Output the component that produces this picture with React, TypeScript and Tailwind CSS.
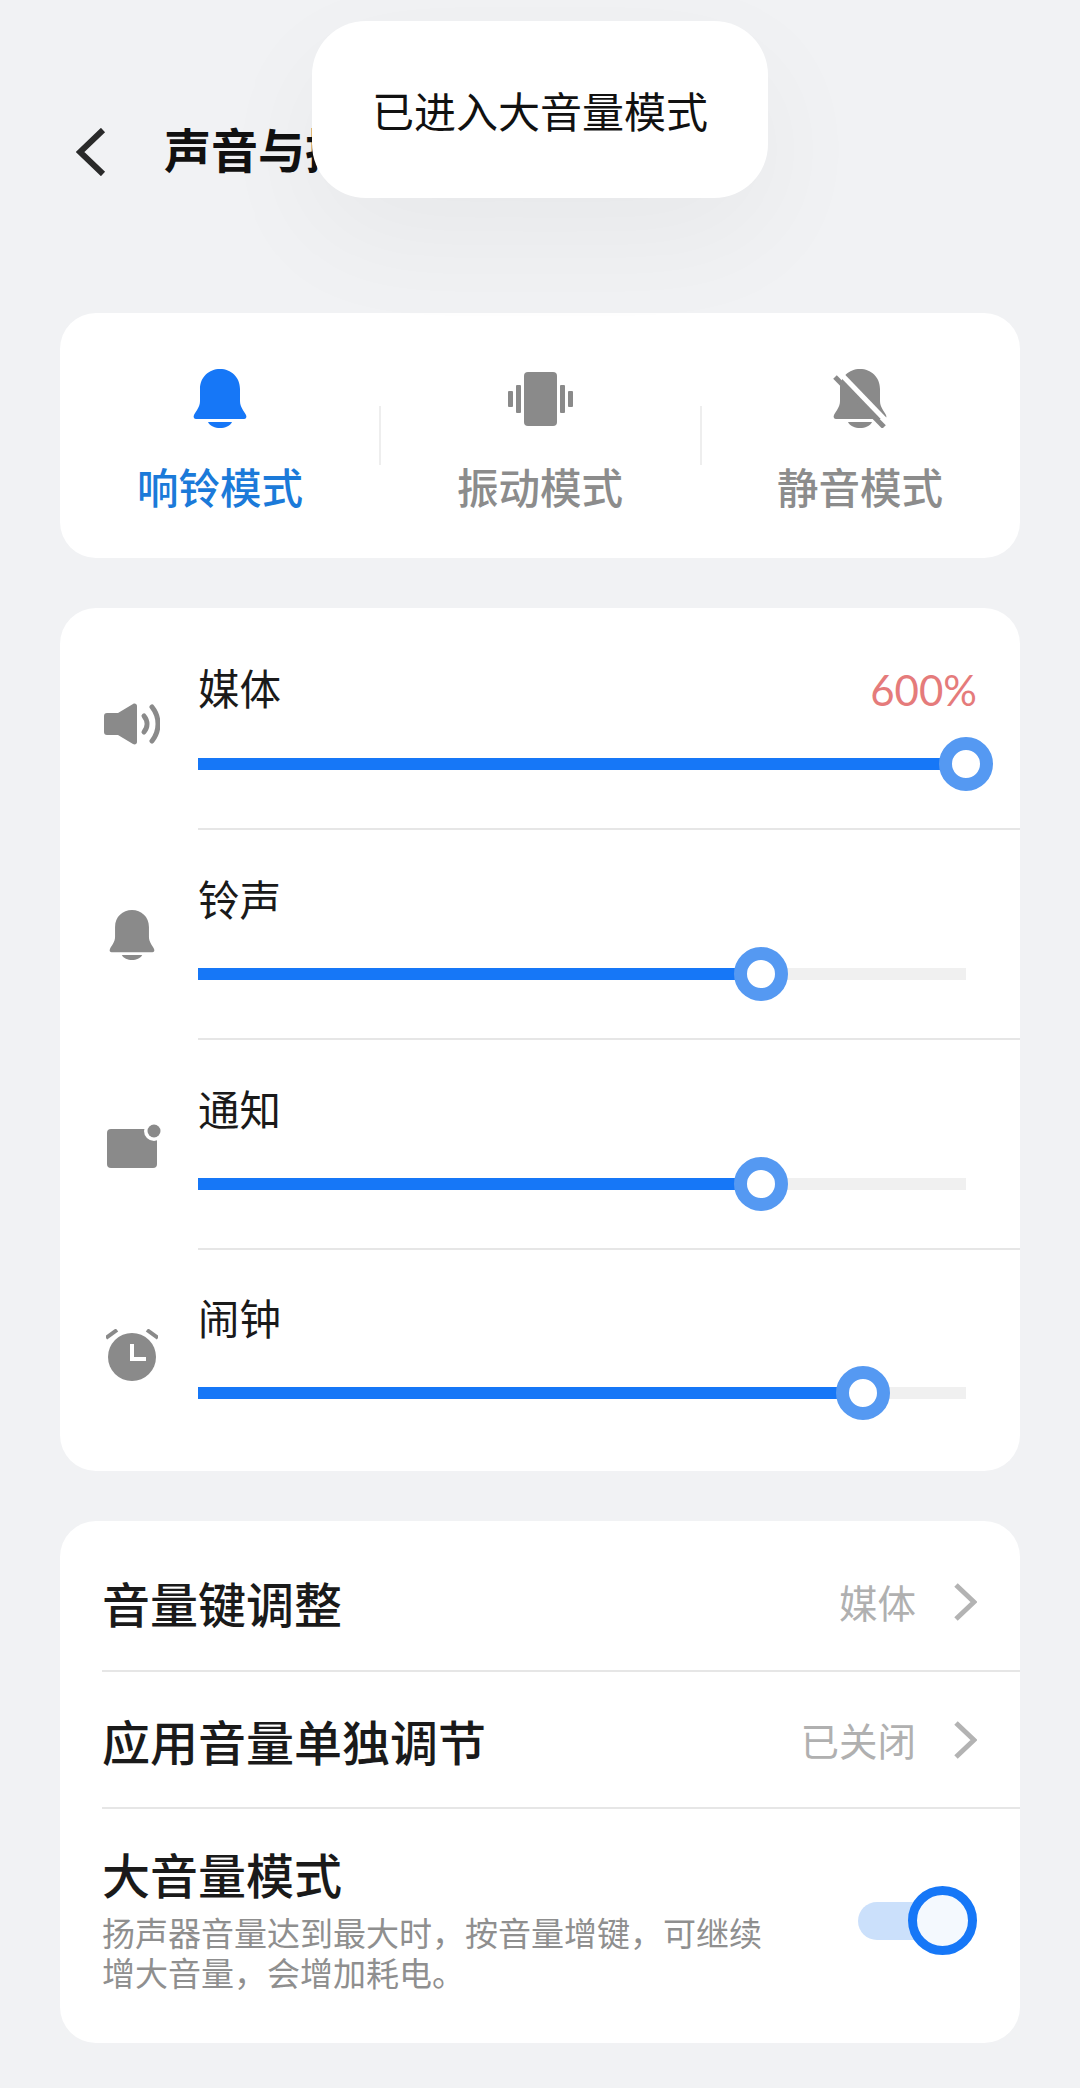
const font = "font-['Noto_Sans_CJK_SC','Noto_Sans',sans-serif]";

const bellBody =
    'M27 0C16 0 7 8 7 20V32C7 38 3 42 1 46C0 48 1 50 3 50H51C53 50 54 48 53 46C51 42 47 38 47 32V20C47 8 38 0 27 0Z';
const bellClapper = 'M15 53H39C37 57 32 59 27 59C22 59 17 57 15 53Z';

function Bell({ className, fill }: { className: string; fill: string }) {
    return (
        <svg viewBox="0 0 54 59" className={className} fill={fill}>
            <path d={bellBody} />
            <path d={bellClapper} />
        </svg>
    );
}

function VibrateIcon() {
    return (
        <svg viewBox="0 0 65 54" className="h-[54px] w-[65px]" fill="#8a8a8a">
            <rect x="16" y="0" width="33" height="54" rx="4" />
            <rect x="8" y="13" width="5" height="28" rx="1" />
            <rect x="52" y="13" width="5" height="28" rx="1" />
            <rect x="0" y="19" width="5" height="16" rx="1" />
            <rect x="60" y="19" width="5" height="16" rx="1" />
        </svg>
    );
}

function MuteIcon() {
    return (
        <svg viewBox="0 0 54 59" className="h-[59px] w-[54px]" fill="#8a8a8a">
            <path d={bellBody} />
            <path d={bellClapper} />
            <line x1="6" y1="3" x2="56" y2="55" stroke="#ffffff" strokeWidth="5" />
            <line x1="2" y1="8" x2="51" y2="58" stroke="#8a8a8a" strokeWidth="5" />
        </svg>
    );
}

function SpeakerIcon() {
    return (
        <svg viewBox="0 0 56 42" className="h-[42px] w-[56px]" fill="#8a8a8a">
            <path d="M3 10H14L29 1C31 0 33 1 33 3V39C33 41 31 42 29 41L14 32H3C1 32 0 31 0 29V13C0 11 1 10 3 10Z" />
            <path d="M40 13C44 18 44 24 40 29" fill="none" stroke="#8a8a8a" strokeWidth="5" strokeLinecap="round" />
            <path d="M48 4C56 14 56 28 48 38" fill="none" stroke="#8a8a8a" strokeWidth="5" strokeLinecap="round" />
        </svg>
    );
}

function NotificationIcon() {
    return (
        <svg viewBox="0 0 56 46" className="ml-[6px] h-[46px] w-[56px]" fill="#8a8a8a">
            <rect x="0" y="7" width="50" height="39" rx="4" />
            <circle cx="47" cy="9" r="10" fill="#ffffff" />
            <circle cx="47" cy="9" r="6.5" />
        </svg>
    );
}

function AlarmIcon() {
    return (
        <svg viewBox="0 0 52 52" className="h-[52px] w-[52px]" fill="#8a8a8a">
            <circle cx="26" cy="28" r="24" />
            <line x1="0" y1="9" x2="11" y2="1" stroke="#8a8a8a" strokeWidth="4" />
            <line x1="41" y1="1" x2="52" y2="9" stroke="#8a8a8a" strokeWidth="4" />
            <path d="M26 15V30H40" fill="none" stroke="#ffffff" strokeWidth="4" />
        </svg>
    );
}

function Chevron() {
    return (
        <svg viewBox="0 0 24 38" className="h-[38px] w-[24px]" fill="none" stroke="#b3b3b3" strokeWidth="5">
            <path d="M3 2L21 19L3 36" />
        </svg>
    );
}

function Mode({ icon, label, active }: { icon: React.ReactNode; label: string; active?: boolean }) {
    return (
        <div className="flex flex-col items-center">
            <div className="flex h-[59px] items-center">{icon}</div>
            <span
                className={`mt-[30px] text-[41.5px] leading-[56px] font-medium ${active ? 'text-[#1b7ad9]' : 'text-[#8c8c8c]'}`}
            >
                {label}
            </span>
        </div>
    );
}

function VolumeRow({
    icon,
    label,
    percent,
    value,
    rowClass,
    iconClass,
    trackClass,
    divider,
}: {
    icon: React.ReactNode;
    label: string;
    percent: number;
    value?: string;
    rowClass: string;
    iconClass: string;
    trackClass: string;
    divider?: boolean;
}) {
    return (
        <div className="flex">
            <div className={`flex w-[138px] shrink-0 justify-center pl-[6px] ${iconClass}`}>{icon}</div>
            <div className={`flex-1 pr-[54px] ${rowClass} ${divider ? 'border-b-2 border-[#e6e6e6]' : ''}`}>
                <div className="flex h-[52px] items-center justify-between">
                    <span className="text-[41.5px] text-[#1a1a1a]">{label}</span>
                    {value && (
                        <span className="mt-[6px] mr-[-11px] font-['Lato','Noto_Sans',sans-serif] text-[42px] text-[#e57b7b]">
                            {value}
                        </span>
                    )}
                </div>
                <div className={`relative h-[12px] w-full bg-[#f0f0f0] ${trackClass}`}>
                    <div className="h-full bg-[#1677f7]" style={{ width: `${percent}%` }} />
                    <div
                        className="absolute top-1/2 h-[54px] w-[54px] -translate-x-1/2 -translate-y-1/2 rounded-full border-[13.5px] border-[#5599f2] bg-white"
                        style={{ left: `${percent}%` }}
                    />
                </div>
            </div>
        </div>
    );
}

function LinkRow({ title, value, rowClass }: { title: string; value: string; rowClass: string }) {
    return (
        <div className={`flex items-center justify-between border-b-2 border-[#e6e6e6] pr-[43px] ${rowClass}`}>
            <span className="text-[48px] font-medium text-[#1a1a1a]">{title}</span>
            <div className="flex items-center gap-[37px]">
                <span className="text-[38.5px] text-[#b0b0b0]">{value}</span>
                <Chevron />
            </div>
        </div>
    );
}

export default function App() {
    return (
        <div className={`relative h-[2088px] w-[1080px] overflow-hidden bg-[#f1f2f4] ${font}`}>
            <div className="flex h-[313px] items-start pt-[128px] pl-[76px]">
                <svg viewBox="0 0 30 48" className="h-[48px] w-[30px]" fill="none" stroke="#2a2a2a" strokeWidth="6">
                    <path d="M27 2L4 24L27 46" />
                </svg>
                <span className="mt-[-12px] ml-[58px] text-[47px] leading-[64px] font-bold text-[#111111]">声音与振动</span>
            </div>

            <div className="absolute top-[21px] left-[312px] z-10 flex h-[177px] w-[456px] items-center justify-center rounded-[54px] bg-white shadow-[0_40px_120px_rgba(0,0,0,0.045)]">
                <span className="text-[42px] text-[#111111]">已进入大音量模式</span>
            </div>

            <div className="mx-[60px] flex flex-col gap-[50px]">
                <div className="relative grid h-[245px] grid-cols-3 rounded-[36px] bg-white pt-[56px]">
                    <Mode icon={<Bell className="h-[59px] w-[54px]" fill="#1677f7" />} label="响铃模式" active />
                    <Mode icon={<VibrateIcon />} label="振动模式" />
                    <Mode icon={<MuteIcon />} label="静音模式" />
                    <div className="absolute top-[93px] left-[319px] h-[59px] w-[2px] bg-[#eeeeee]" />
                    <div className="absolute top-[93px] left-[640px] h-[59px] w-[2px] bg-[#eeeeee]" />
                </div>

                <div className="rounded-[36px] bg-white">
                    <VolumeRow
                        icon={<SpeakerIcon />}
                        label="媒体"
                        value="600%"
                        percent={100}
                        rowClass="h-[222px] pt-[53px]"
                        iconClass="items-center pt-[10px]"
                        trackClass="mt-[45px]"
                        divider
                    />
                    <VolumeRow
                        icon={<Bell className="h-[50px] w-[46px]" fill="#8a8a8a" />}
                        label="铃声"
                        percent={73.3}
                        rowClass="h-[210px] pt-[42px]"
                        iconClass="items-center"
                        trackClass="mt-[44px]"
                        divider
                    />
                    <VolumeRow
                        icon={<NotificationIcon />}
                        label="通知"
                        percent={73.3}
                        rowClass="h-[210px] pt-[42px]"
                        iconClass="items-center"
                        trackClass="mt-[44px]"
                        divider
                    />
                    <VolumeRow
                        icon={<AlarmIcon />}
                        label="闹钟"
                        percent={86.6}
                        rowClass="h-[221px] pt-[41px]"
                        iconClass="items-center pb-[12px]"
                        trackClass="mt-[44px]"
                    />
                </div>

                <div className="h-[522px] rounded-[36px] bg-white pl-[42px]">
                    <LinkRow title="音量键调整" value="媒体" rowClass="h-[151px] pt-[13px]" />
                    <LinkRow title="应用音量单独调节" value="已关闭" rowClass="h-[137px]" />
                    <div className="flex items-start justify-between pr-[43px]">
                        <div className="pt-[32px]">
                            <div className="text-[48px] leading-[64px] font-medium text-[#1a1a1a]">大音量模式</div>
                            <div className="mt-[7px] w-[670px] text-[33px] leading-[40px] text-[#8f8f8f]">
                                扬声器音量达到最大时，按音量增键，可继续增大音量，会增加耗电。
                            </div>
                        </div>
                        <div className="relative mt-[77px] h-[69px] w-[119px]">
                            <div className="absolute top-[16px] left-0 h-[38px] w-[90px] rounded-full bg-[#cbe0fb]" />
                            <div className="absolute top-0 right-0 h-[69px] w-[69px] rounded-full border-[9px] border-[#1677f7] bg-[#f4f9fe]" />
                        </div>
                    </div>
                </div>
            </div>
        </div>
    );
}
